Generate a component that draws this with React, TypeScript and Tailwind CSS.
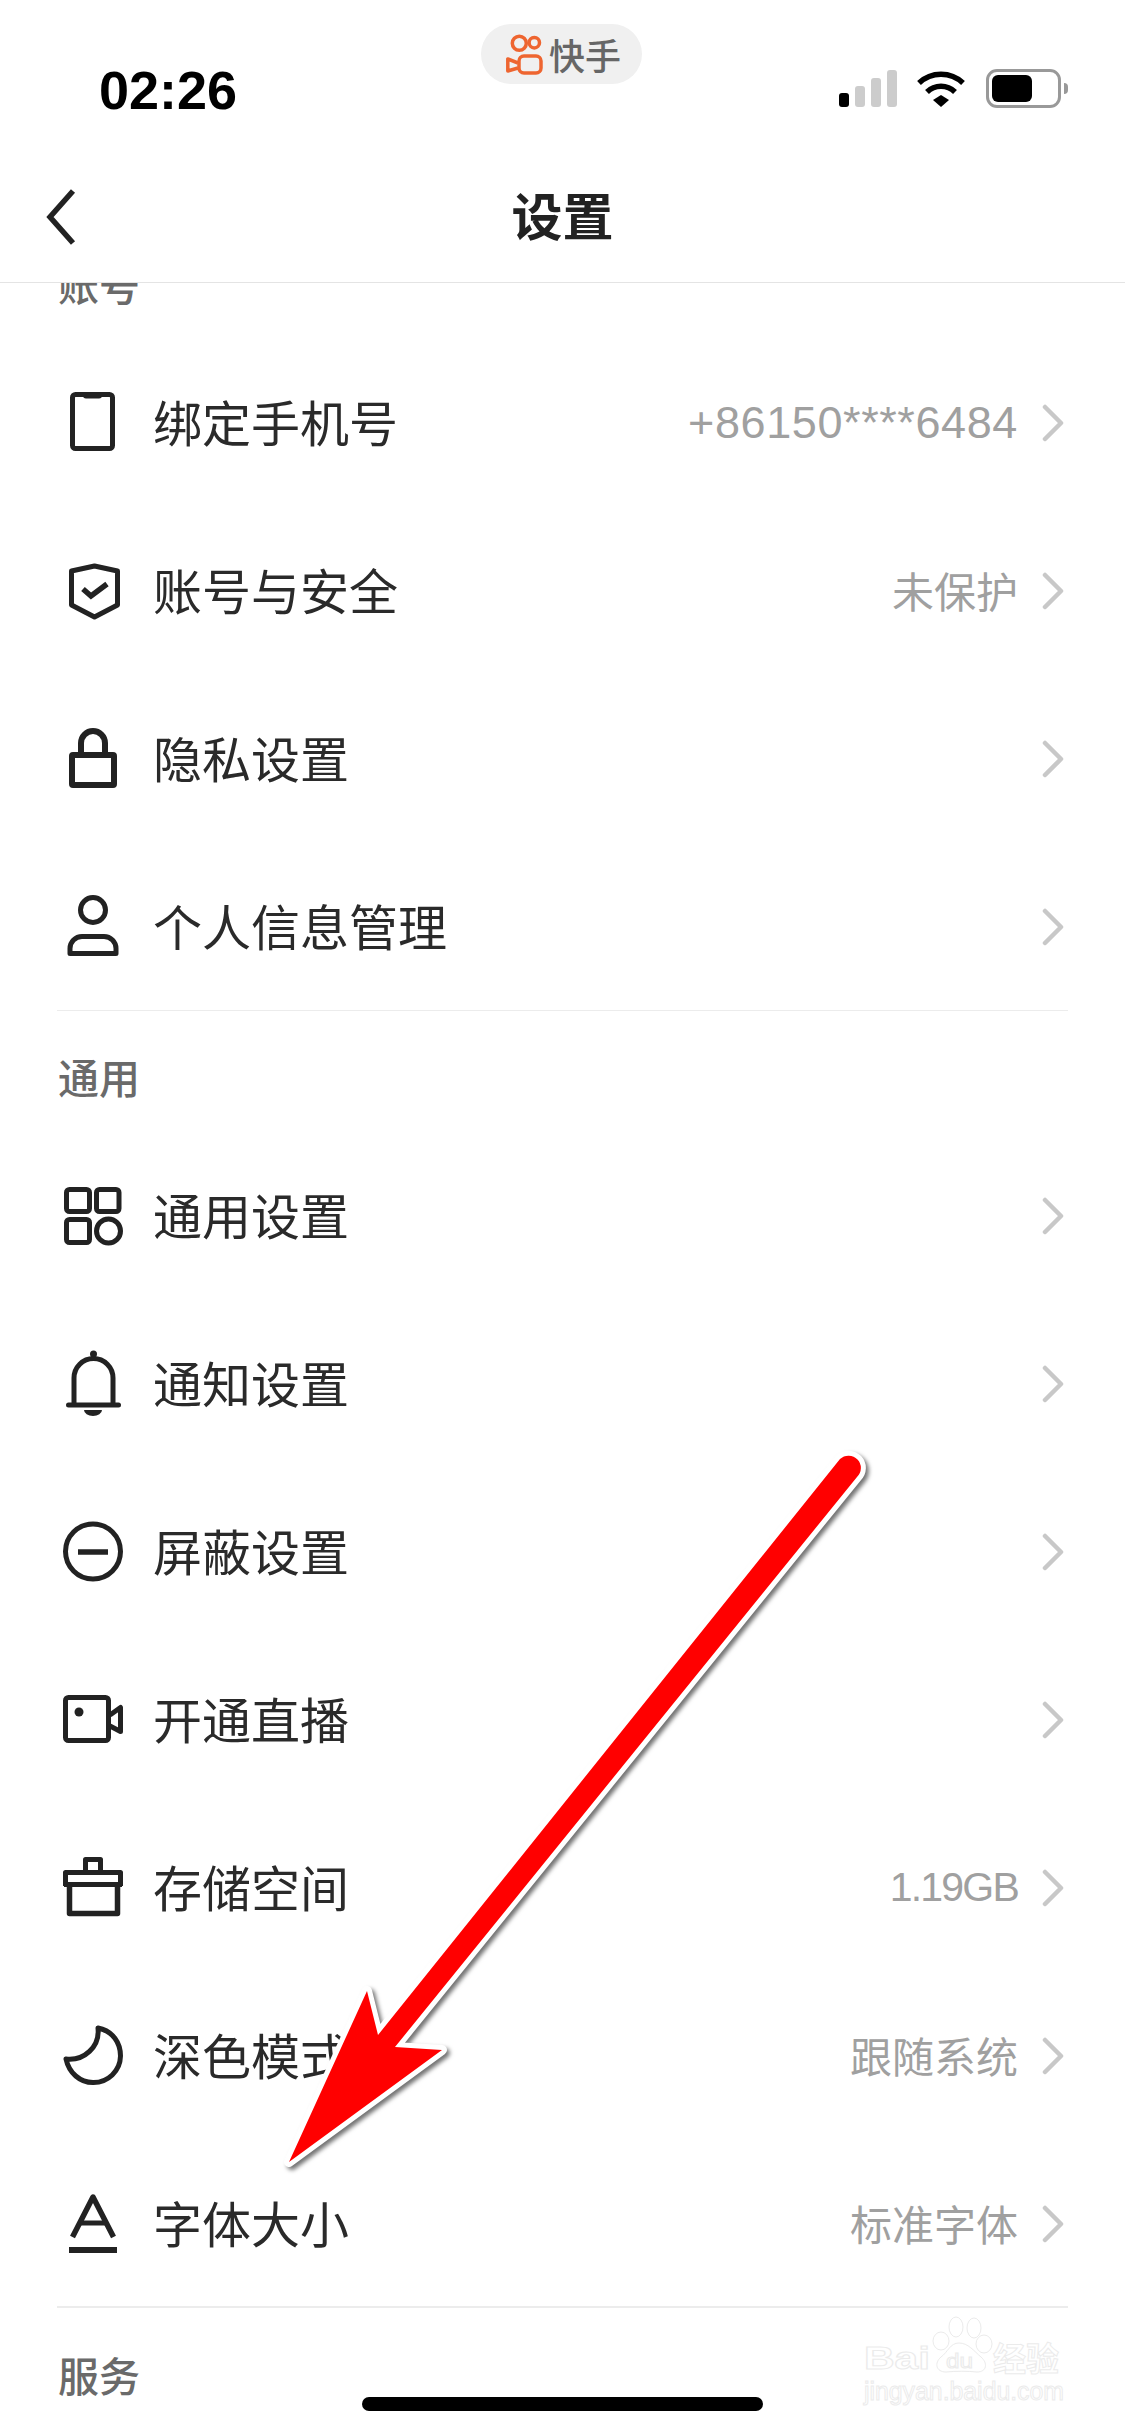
import type { ReactNode } from "react";

const cjk = "font-['Noto_Sans_CJK_SC','Liberation_Sans',sans-serif]";
const latin = "font-['Liberation_Sans',sans-serif]";

function Icon({ children }: { children: ReactNode }) {
  return (
    <svg
      viewBox="0 0 66 66"
      className="w-[66px] h-[66px] shrink-0 overflow-visible"
      fill="none"
      stroke="#222"
      strokeWidth="5"
    >
      {children}
    </svg>
  );
}

const PhoneIcon = () => (
  <Icon>
    <rect x="12.5" y="4.5" width="40" height="54" rx="3" />
    <path d="M23 4h19v1.5a3 3 0 0 1-3 3H26a3 3 0 0 1-3-3z" fill="#222" stroke="none" />
  </Icon>
);
const ShieldIcon = () => (
  <Icon>
    <path d="M34.5 8L57.5 13V47L34.5 59L11.5 47V13Z" strokeLinejoin="round" />
    <path d="M23 31L31 38L47 26" strokeWidth="5.5" />
  </Icon>
);
const LockIcon = () => (
  <Icon>
    <rect x="12" y="29" width="42" height="30" rx="1" strokeWidth="6" />
    <path d="M21 29V17a12 12 0 0 1 24 0V29" strokeWidth="6" />
  </Icon>
);
const PersonIcon = () => (
  <Icon>
    <circle cx="33" cy="16" r="12.5" />
    <path d="M10 59.5v-5a12 12 0 0 1 12-12h22a12 12 0 0 1 12 12v5z" strokeLinejoin="round" />
  </Icon>
);
const AppsIcon = () => (
  <Icon>
    <rect x="6.5" y="6.5" width="23" height="22" rx="3" />
    <rect x="36.5" y="6.5" width="22.5" height="22" rx="3" />
    <rect x="6.5" y="36.5" width="23" height="23" rx="3" />
    <circle cx="48.5" cy="48" r="12" />
  </Icon>
);
const BellIcon = () => (
  <Icon>
    <path d="M14 52V27a19.5 19.5 0 0 1 39 0V52" />
    <path d="M8.5 54H58.5" strokeLinecap="round" />
    <circle cx="33.5" cy="3" r="3.5" fill="#222" stroke="none" />
    <path d="M24 59h18a9 6 0 0 1-18 0z" fill="#222" stroke="none" />
  </Icon>
);
const MinusIcon = () => (
  <Icon>
    <circle cx="33" cy="32.5" r="27.5" />
    <path d="M18 33H48" strokeWidth="5.5" />
  </Icon>
);
const VideoIcon = () => (
  <Icon>
    <rect x="5.5" y="10.5" width="43" height="43" rx="3" />
    <path d="M50 28L60.5 20.5V44.5L50 39" strokeLinejoin="round" />
    <circle cx="19" cy="25" r="4.5" fill="#222" stroke="none" />
  </Icon>
);
const BoxIcon = () => (
  <Icon>
    <path d="M25.5 17V4.5H40.5V17" strokeLinejoin="round" />
    <path d="M5.5 31V17.5H60.5V31" strokeLinejoin="round" />
    <path d="M4 29.5H62" />
    <path d="M9.5 30V58.5H57.5V30" strokeLinejoin="round" strokeWidth="5.5" />
  </Icon>
);
const MoonIcon = () => (
  <Icon>
    <path d="M38 5C53 8 60.5 20 60.5 33A27 27 0 0 1 33 59.5C20 59.5 9 50 6 36C24 38 40 24 38 5Z" strokeLinejoin="round" />
  </Icon>
);
const FontIcon = () => (
  <Icon>
    <path d="M12.5 46L33 6L53.5 46" strokeWidth="5.5" strokeLinejoin="round" />
    <path d="M20 32H46" />
    <path d="M9 59H57" strokeWidth="6" />
  </Icon>
);

function Chevron() {
  return (
    <svg viewBox="0 0 22 38" className="w-[22px] h-[38px] shrink-0" fill="none" stroke="#c8c8c8" strokeWidth="4.5" strokeLinecap="round" strokeLinejoin="round">
      <path d="M3 3L19 19L3 35" />
    </svg>
  );
}

function Row({ icon, label, value, valueClass }: { icon: ReactNode; label: string; value?: string; valueClass?: string }) {
  return (
    <div className="h-[168px] flex items-center pl-[60px] pr-[61px]">
      {icon}
      <span className={`ml-[27px] pb-[6px] text-[49px] leading-none text-[#2a2a2a] ${cjk}`}>{label}</span>
      <div className="ml-auto flex items-center gap-[24px]">
        {value && (
          <span className={`leading-none text-[#a0a0a0] ${valueClass ?? `text-[42px] pb-[3px] ${cjk}`}`}>{value}</span>
        )}
        <Chevron />
      </div>
    </div>
  );
}

function SectionLabel({ children, className = "" }: { children: string; className?: string }) {
  return (
    <div className={`h-[122px] flex items-center pt-[11px] pl-[58px] text-[41px] leading-none font-medium text-[#6a6a6a] ${cjk} ${className}`}>
      {children}
    </div>
  );
}

function StatusBar() {
  return (
    <div className="h-[120px] flex items-start pl-[99px]">
      <div className={`w-[382px] mt-[63px] text-[54px] leading-none font-bold text-black ${latin}`}>02:26</div>
      <div className="w-[161px] h-[60px] mt-[24px] rounded-full bg-[#f0f0f0] flex items-center pl-[25px]">
        <svg viewBox="0 0 37 42" className="w-[37px] h-[42px]" fill="none" stroke="#ee6530" strokeWidth="3.5">
          <circle cx="13.3" cy="10.3" r="7" />
          <circle cx="28.3" cy="9.7" r="5.2" />
          <rect x="13" y="23" width="22" height="17" rx="5" />
          <path d="M12 30L1.8 26V38L12 35" strokeLinejoin="round" />
        </svg>
        <span className={`ml-[6px] text-[36px] leading-none font-medium text-[#666] ${cjk}`}>快手</span>
      </div>
      <div className="ml-[197px] mt-[70px] h-[37px] flex items-end gap-[6px]">
        <div className="w-[10px] h-[14px] rounded-[3px] bg-black" />
        <div className="w-[10px] h-[21px] rounded-[3px] bg-[#ccc]" />
        <div className="w-[10px] h-[29px] rounded-[3px] bg-[#ccc]" />
        <div className="w-[10px] h-[37px] rounded-[3px] bg-[#ccc]" />
      </div>
      <svg viewBox="0 0 50 37" className="w-[50px] h-[37px] ml-[19px] mt-[70px]" fill="none" stroke="#000">
        <path d="M3 13A32 32 0 0 1 47 13" strokeWidth="5.5" />
        <path d="M11 22A20 20 0 0 1 39 22" strokeWidth="5.5" />
        <path d="M17 30L25 25L33 30L25 37Z" fill="#000" stroke="none" />
      </svg>
      <div className="ml-[20px] mt-[69px] w-[75px] h-[39px] rounded-[11px] border-[3px] border-[#999] p-[3px]">
        <div className="w-[40px] h-full rounded-[6px] bg-black" />
      </div>
      <div className="ml-[3px] mt-[83px] w-[4px] h-[11px] rounded-r-full bg-[#999]" />
    </div>
  );
}

function Arrow() {
  return (
    <svg viewBox="0 0 1125 2436" className="absolute inset-0 w-[1125px] h-[2436px] pointer-events-none drop-shadow-[3px_3px_2px_rgba(0,0,0,0.55)]">
      <path
        d="M289 2162L367 1991L378 2035L840 1459A12 12 0 0 1 857 1477L395 2047L442 2050Z"
        fill="#ff0000"
        stroke="#fff"
        strokeWidth="10"
        strokeLinejoin="round"
        paintOrder="stroke"
      />
    </svg>
  );
}

function Watermark() {
  return (
    <svg viewBox="0 0 220 110" className="absolute left-[855px] top-[2305px] w-[220px] h-[110px]" fill="#fff" stroke="#ebebeb" strokeWidth="1">
      <text x="9" y="64" fontSize="31" fontWeight="700" textLength="66" lengthAdjust="spacingAndGlyphs" fontFamily="Liberation Sans, sans-serif">Bai</text>
      <ellipse cx="101" cy="22" rx="7" ry="10" />
      <ellipse cx="119" cy="23" rx="7" ry="10" />
      <ellipse cx="86" cy="36" rx="8" ry="9" />
      <ellipse cx="129" cy="39" rx="8" ry="9" />
      <path d="M104 38C113 38 119 46 126 52C133 58 132 67 122 67C113 66 101 66 91 67C81 67 79 58 86 52C93 47 95 38 104 38Z" />
      <text x="91" y="63" fontSize="20" textLength="27" lengthAdjust="spacingAndGlyphs" fontFamily="Liberation Sans, sans-serif">du</text>
      <text x="138" y="66" fontSize="33" fontWeight="700" fontFamily="Noto Sans CJK SC, sans-serif">经验</text>
      <text x="9" y="95" fontSize="26" textLength="200" lengthAdjust="spacingAndGlyphs" fontFamily="Liberation Sans, sans-serif">jingyan.baidu.com</text>
    </svg>
  );
}

export default function App() {
  return (
    <div className="relative w-[1125px] h-[2436px] overflow-hidden bg-white flex flex-col">
      <StatusBar />
      <header className="h-[163px] shrink-0 grid grid-cols-[1fr_auto_1fr] items-center pt-[32px] border-b border-[#e4e4e4]">
        <svg viewBox="0 0 30 56" className="ml-[46px] w-[30px] h-[56px]" fill="none" stroke="#222" strokeWidth="6">
          <path d="M27 2L4 28L27 54" strokeWidth="5.5" />
        </svg>
        <h1 className={`pb-[6px] text-[51px] leading-none font-bold text-[#222] ${cjk}`}>设置</h1>
        <div />
      </header>
      <main className="flex-1 overflow-hidden">
        <SectionLabel className="-mt-[66px]">账号</SectionLabel>
        <Row icon={<PhoneIcon />} label="绑定手机号" value="+86150****6484" valueClass={`text-[45px] tracking-[0.6px] pb-[2px] ${latin}`} />
        <Row icon={<ShieldIcon />} label="账号与安全" value="未保护" />
        <Row icon={<LockIcon />} label="隐私设置" />
        <Row icon={<PersonIcon />} label="个人信息管理" />
        <div className="mx-[57px] h-px -mt-px bg-[#ececec]" />
        <SectionLabel className="-mt-px">通用</SectionLabel>
        <Row icon={<AppsIcon />} label="通用设置" />
        <Row icon={<BellIcon />} label="通知设置" />
        <Row icon={<MinusIcon />} label="屏蔽设置" />
        <Row icon={<VideoIcon />} label="开通直播" />
        <Row icon={<BoxIcon />} label="存储空间" value="1.19GB" valueClass={`text-[41px] tracking-[-1.8px] pb-[2px] ${latin}`} />
        <Row icon={<MoonIcon />} label="深色模式" value="跟随系统" />
        <Row icon={<FontIcon />} label="字体大小" value="标准字体" />
        <div className="mx-[57px] h-[2px] -mt-[2px] bg-[#ececec]" />
        <SectionLabel>服务</SectionLabel>
      </main>
      <Watermark />
      <Arrow />
      <div className="absolute left-[362px] top-[2397px] w-[401px] h-[14px] rounded-full bg-black" />
    </div>
  );
}
